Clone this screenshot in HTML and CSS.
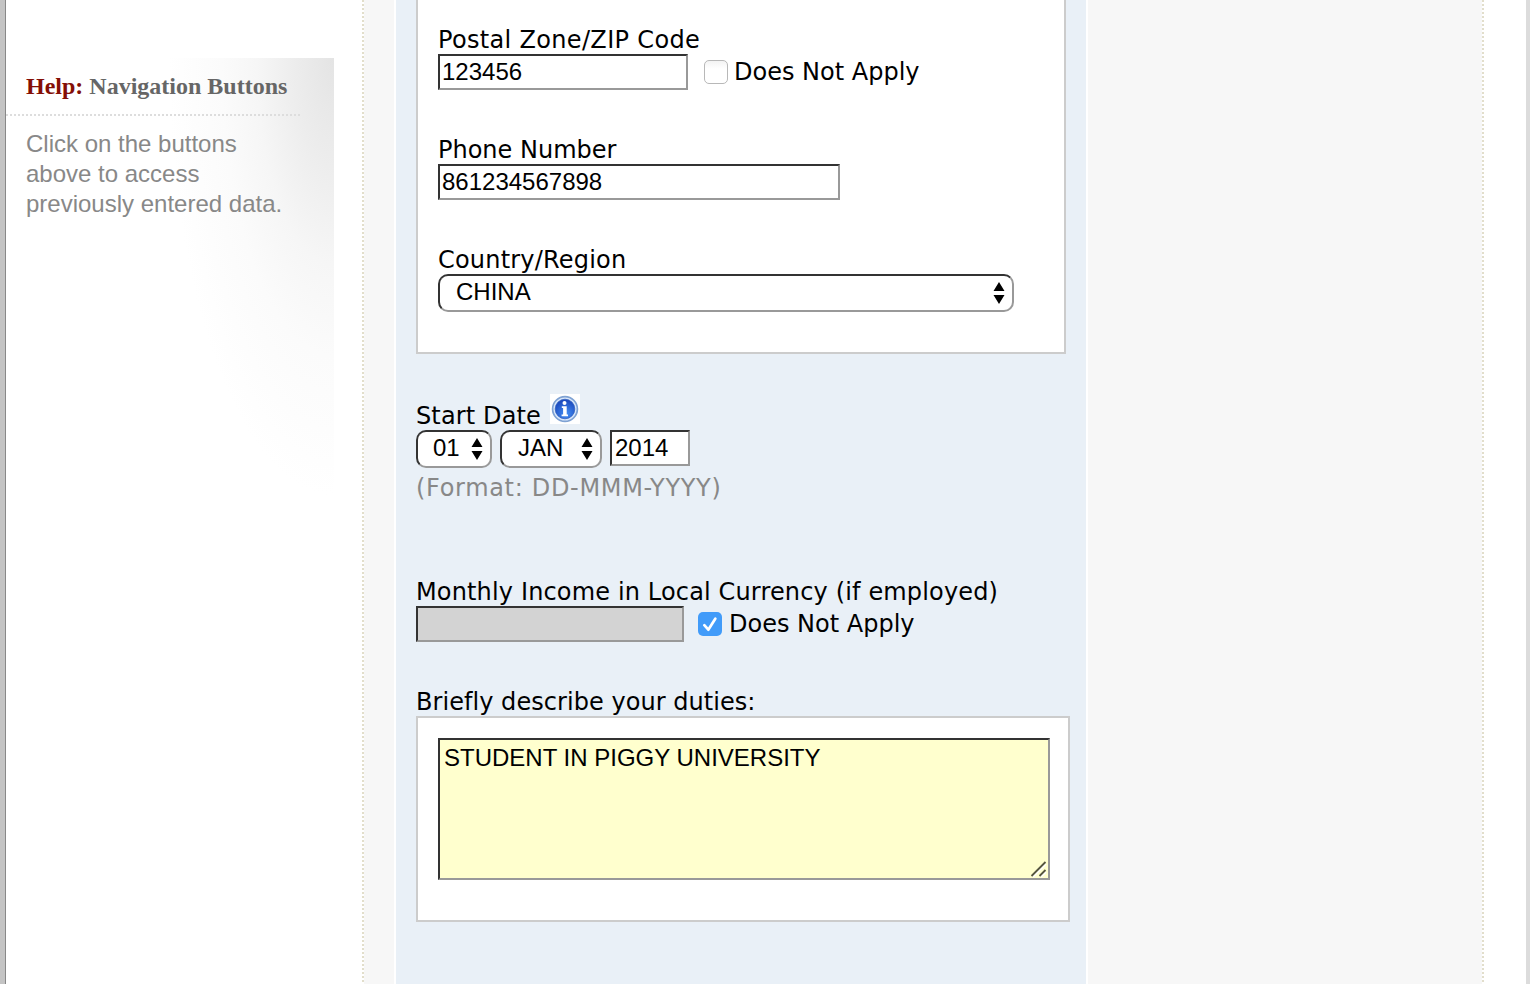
FILE: index.html
```html
<!DOCTYPE html>
<html lang="en">
<head>
<meta charset="utf-8">
<title>Work Information</title>
<link rel="stylesheet" href="styles.css">
</head>
<body>
<div class="page">
  <aside class="sidebar">
    <section class="help">
      <h2 class="help-title"><span class="help-tag">Help:</span> Navigation Buttons</h2>
      <p class="help-text">Click on the buttons<br>above to access<br>previously entered data.</p>
    </section>
  </aside>
  <div class="content">
    <main class="form">
      <section class="panel address">
        <div class="field">
          <div class="label"><span class="t-zip">Postal Zone/ZIP Code</span></div>
          <div class="row"><div class="input zip">123456</div><span class="check"></span><span class="text">Does Not Apply</span></div>
        </div>
        <div class="field">
          <div class="label"><span>Phone Number</span></div>
          <div class="input phone">861234567898</div>
        </div>
        <div class="field">
          <div class="label"><span class="t-country">Country/Region</span></div>
          <div class="select country"><span>CHINA</span><svg class="arrows" viewBox="0 0 12 22"><path d="M6 0l5.5 9H.5zM6 22l5.5-9H.5z"/></svg></div>
        </div>
      </section>
      <section class="date">
        <div class="date-label"><div class="label"><span class="t-start">Start Date</span></div>
          <svg class="info" viewBox="0 0 30 30">
            <defs><radialGradient id="ball" cx=".55" cy=".75" r=".7"><stop offset="0" stop-color="#4590f5"/><stop offset="1" stop-color="#1c49bd"/></radialGradient></defs>
            <rect width="30" height="30" fill="#fff"/>
            <circle cx="15" cy="15" r="12.4" fill="#d9e7fa" stroke="#7fa2d3" stroke-width="1.7"/>
            <circle cx="15" cy="15" r="9.8" fill="url(#ball)" stroke="#3261bf" stroke-width=".8"/>
            <circle cx="14.5" cy="8.9" r="2" fill="#fff"/>
            <path d="M11.8 12.3h4.9v8.2h1.3v1.7h-6.4v-1.7h1.5v-6.5h-1.3z" fill="#fff"/>
          </svg>
        </div>
        <div class="row date-row">
          <div class="select day"><span>01</span><svg class="arrows" viewBox="0 0 12 22"><path d="M6 0l5.5 9H.5zM6 22l5.5-9H.5z"/></svg></div>
          <div class="select month"><span>JAN</span><svg class="arrows" viewBox="0 0 12 22"><path d="M6 0l5.5 9H.5zM6 22l5.5-9H.5z"/></svg></div>
          <div class="input year">2014</div>
        </div>
        <div class="label hint"><span class="t-format">(Format: DD-MMM-YYYY)</span></div>
      </section>
      <section class="income">
        <div class="label"><span class="t-income">Monthly Income in Local Currency (if employed)</span></div>
        <div class="row"><div class="input disabled"></div><svg class="checked" viewBox="0 0 24 24"><rect width="24" height="24" rx="5" fill="#419bf9"/><path d="M6.3 13.2l4 4.5L17.3 6.7" fill="none" stroke="#fff" stroke-width="2.7" stroke-linecap="round" stroke-linejoin="round"/></svg><span class="text">Does Not Apply</span></div>
      </section>
      <section class="duties">
        <div class="label"><span class="t-duties">Briefly describe your duties:</span></div>
        <div class="panel duties-panel">
          <div class="textarea"><span>STUDENT IN PIGGY UNIVERSITY</span>
            <svg class="grip" viewBox="0 0 18 18"><path d="M4 17L17 4M12 17l5-5" stroke="#fff" stroke-width="1.6"/><path d="M2.5 16L16.5 2M10.5 16l6-6" stroke="#55553f" stroke-width="1.8"/></svg>
          </div>
        </div>
      </section>
    </main>
  </div>
</div>
</body>
</html>
```
FILE: styles.css
```css
* { box-sizing: border-box; }
body { margin: 0; background: #fff; font-family: "Liberation Sans", Arial, sans-serif; font-size: 24px; color: #000; }
.page { display: flex; width: 1530px; height: 984px; overflow: hidden; border-left: 5px solid #c4c4c4; border-right: 4px solid #dcdcdc; }
.sidebar { width: 357px; padding-top: 58px; border-left: 1px solid #888; }
.help { width: 328px; height: 438px; background: radial-gradient(ellipse 165px 438px at 100% 0, #e4e4e4 0%, #ededed 25%, #f6f6f6 47%, #fbfbfb 68%, #fdfdfd 85%, #fff 100%); }
.help-title { margin: 0; width: 294px; height: 58px; padding: 13px 0 0 20px; font: bold 24px/30px "Liberation Serif", serif; color: #666; white-space: nowrap; background: repeating-linear-gradient(90deg, #ddd 0 2px, transparent 2px 4px) 0 100% / 100% 2px no-repeat; }
.help-tag { color: #840f06; }
.help-text { margin: 0; padding: 13px 0 0 20px; line-height: 30px; color: #888; white-space: nowrap; }
.content { width: 1122px; padding-left: 32px; background: repeating-linear-gradient(#e2decb 0 2px, #fff 2px 4px) 0 0 / 2px 100% no-repeat, repeating-linear-gradient(#e2decb 0 2px, #fff 2px 4px) 100% 0 / 2px 100% no-repeat, #f7f7f7; }
.form { width: 694px; height: 984px; padding-left: 20px; background: #e9f0f7; border: solid #fff; border-width: 0 2px; }
.panel { background: #fff; border: 2px solid #ccc; }
.address { width: 650px; height: 354px; padding: 24px 20px 0; border-top: 0; }
.field { height: 110px; }
.label { height: 30px; line-height: 32px; white-space: nowrap; font-family: "DejaVu Sans", Verdana, sans-serif; }
.text { line-height: 36px; white-space: nowrap; font-family: "DejaVu Sans", Verdana, sans-serif; }
.t-zip { letter-spacing: .33px; }
.t-country { letter-spacing: .2px; }
.t-start { letter-spacing: .13px; }
.t-format { letter-spacing: .68px; }
.t-income { letter-spacing: .15px; }
.t-duties { letter-spacing: .05px; }
.row { display: flex; align-items: flex-start; }
.input { height: 36px; padding-left: 2px; line-height: 32px; background: #fff; border: 2px solid; border-color: #333 #999 #999 #333; }
.zip { width: 250px; }
.phone { width: 402px; }
.check { width: 24px; height: 24px; margin: 6px 6px 0 16px; border: 1px solid #b8b8b8; border-radius: 5px; background: linear-gradient(#f3f3f3, #fff 35%); }
.select { display: flex; justify-content: space-between; height: 38px; padding: 0 8px 0 16px; line-height: 32px; background: #fff; border: 2px solid; border-color: #333 #999 #999 #333; border-radius: 10px; }
.arrows { width: 12px; height: 22px; margin-top: 6px; }
.country { width: 576px; padding-right: 7px; }
.date-label { display: flex; height: 36px; margin-top: 40px; }
.date-label .label { padding-top: 6px; }
.date-label .label { width: 124px; height: 36px; }
.info { width: 30px; height: 30px; margin-left: 10px; }
.date-row { gap: 8px; }
.day { width: 76px; padding: 0 7px 0 15px; }
.month { width: 102px; padding-right: 7px; }
.year { width: 80px; padding-left: 3px; }
.hint { margin-top: 4px; color: #888; }
.income { padding-top: 74px; }
.disabled { width: 268px; background: #d3d3d3; }
.checked { width: 24px; height: 24px; margin: 6px 7px 0 14px; }
.duties { padding-top: 44px; }
.duties-panel { width: 654px; height: 206px; padding: 20px; }
.textarea { position: relative; width: 612px; height: 142px; padding: 2px 4px; line-height: 32px; background: #ffffce; border: 2px solid; border-color: #333 #999 #999 #333; }
.grip { position: absolute; right: 1px; bottom: 0; width: 18px; height: 18px; }
```
